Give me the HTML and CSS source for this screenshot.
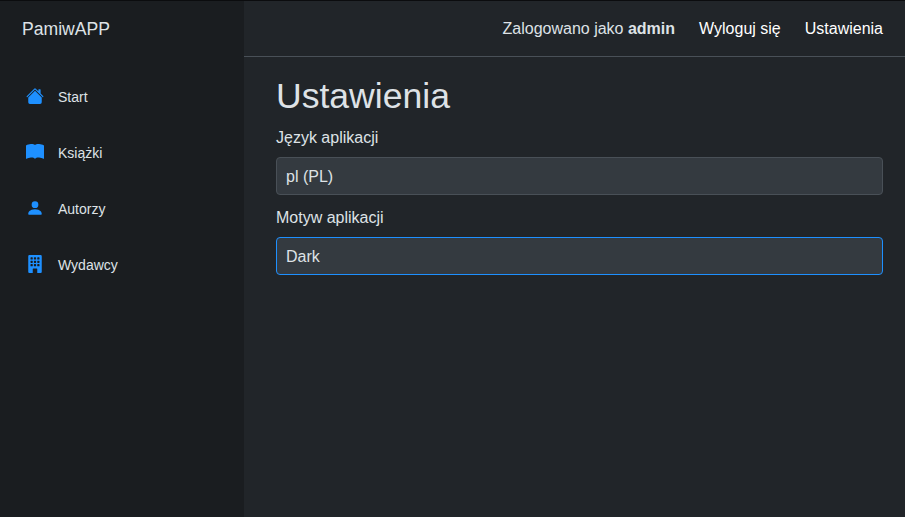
FILE: index.html
```
<!DOCTYPE html>
<html lang="pl">
<head>
<meta charset="utf-8">
<title>Ustawienia</title>
<link rel="stylesheet" href="styles.css">
</head>
<body>
<div class="page">
  <aside class="sidebar">
    <div class="brand">PamiwAPP</div>
    <nav class="menu">
      <a class="menu-item"><svg class="icon" viewBox="0 0 16 16"><path d="M8.707 1.5a1 1 0 0 0-1.414 0L.646 8.146a.5.5 0 0 0 .708.708L8 2.207l6.646 6.647a.5.5 0 0 0 .708-.708L13 5.793V2.5a.5.5 0 0 0-.5-.5h-1a.5.5 0 0 0-.5.5v1.293z"/><path d="m8 3.293 6 6V13.5a1.5 1.5 0 0 1-1.5 1.5h-9A1.5 1.5 0 0 1 2 13.5V9.293z"/></svg><span>Start</span></a>
      <a class="menu-item"><svg class="icon" viewBox="0 0 16 16"><path d="M8 1.783C7.015.936 5.587.81 4.287.94c-1.514.153-3.042.672-3.994 1.105A.5.5 0 0 0 0 2.5v11a.5.5 0 0 0 .707.455c.882-.4 2.303-.881 3.68-1.02 1.409-.142 2.59.087 3.223.877a.5.5 0 0 0 .78 0c.633-.79 1.814-1.019 3.222-.877 1.378.139 2.8.62 3.681 1.02A.5.5 0 0 0 16 13.5v-11a.5.5 0 0 0-.293-.455c-.952-.433-2.48-.952-3.994-1.105C10.413.809 8.985.936 8 1.783"/></svg><span>Książki</span></a>
      <a class="menu-item"><svg class="icon" viewBox="0 0 16 16"><path d="M3 14s-1 0-1-1 1-4 6-4 6 3 6 4-1 1-1 1zm5-6a3 3 0 1 0 0-6 3 3 0 0 0 0 6"/></svg><span>Autorzy</span></a>
      <a class="menu-item"><svg class="icon" viewBox="0 0 16 16"><path fill-rule="evenodd" d="M3 0a1 1 0 0 0-1 1v14a1 1 0 0 0 1 1h3v-3.5a.5.5 0 0 1 .5-.5h3a.5.5 0 0 1 .5.5V16h3a1 1 0 0 0 1-1V1a1 1 0 0 0-1-1zM4.500 2h1a.5.5 0 0 1 .5.5v1a.5.5 0 0 1-.5.5h-1a.5.5 0 0 1-.5-.5v-1a.5.5 0 0 1 .5-.5zM7.500 2h1a.5.5 0 0 1 .5.5v1a.5.5 0 0 1-.5.5h-1a.5.5 0 0 1-.5-.5v-1a.5.5 0 0 1 .5-.5zM10.500 2h1a.5.5 0 0 1 .5.5v1a.5.5 0 0 1-.5.5h-1a.5.5 0 0 1-.5-.5v-1a.5.5 0 0 1 .5-.5zM4.500 5h1a.5.5 0 0 1 .5.5v1a.5.5 0 0 1-.5.5h-1a.5.5 0 0 1-.5-.5v-1a.5.5 0 0 1 .5-.5zM7.500 5h1a.5.5 0 0 1 .5.5v1a.5.5 0 0 1-.5.5h-1a.5.5 0 0 1-.5-.5v-1a.5.5 0 0 1 .5-.5zM10.500 5h1a.5.5 0 0 1 .5.5v1a.5.5 0 0 1-.5.5h-1a.5.5 0 0 1-.5-.5v-1a.5.5 0 0 1 .5-.5zM4.500 8h1a.5.5 0 0 1 .5.5v1a.5.5 0 0 1-.5.5h-1a.5.5 0 0 1-.5-.5v-1a.5.5 0 0 1 .5-.5zM7.500 8h1a.5.5 0 0 1 .5.5v1a.5.5 0 0 1-.5.5h-1a.5.5 0 0 1-.5-.5v-1a.5.5 0 0 1 .5-.5zM10.500 8h1a.5.5 0 0 1 .5.5v1a.5.5 0 0 1-.5.5h-1a.5.5 0 0 1-.5-.5v-1a.5.5 0 0 1 .5-.5z"/></svg><span>Wydawcy</span></a>
    </nav>
  </aside>
  <main class="main">
    <header class="topbar">
      <span>Zalogowano jako <b>admin</b></span>
      <a class="top-link">Wyloguj się</a>
      <a class="top-link">Ustawienia</a>
    </header>
    <section class="content">
      <h1>Ustawienia</h1>
      <div class="field">
        <div class="label">Język aplikacji</div>
        <div class="select">pl (PL)</div>
      </div>
      <div class="field">
        <div class="label">Motyw aplikacji</div>
        <div class="select active">Dark</div>
      </div>
    </section>
  </main>
</div>
</body>
</html>
```
FILE: styles.css
```
* { box-sizing: border-box; }
body {
  margin: 0;
  background: #212529;
  color: #dee2e6;
  font: 16px/24px "Liberation Sans", Arial, sans-serif;
}
.page {
  display: flex;
  height: 517px;
  border-top: 1px solid #0b0c0e;
}
.sidebar {
  width: 244px;
  background: #1a1d20;
}
.brand {
  height: 56px;
  padding-left: 22px;
  font-size: 17.6px;
  line-height: 56px;
}
.menu { padding-top: 12px; }
.menu-item {
  display: flex;
  align-items: center;
  gap: 14px;
  height: 56px;
  padding-left: 26px;
  font-size: 14px;
}
.icon {
  width: 18px;
  height: 18px;
  margin-bottom: 2px;
  fill: #1e90ff;
}
.main { flex: 1; }
.topbar {
  display: flex;
  justify-content: flex-end;
  align-items: center;
  gap: 24px;
  height: 56px;
  padding-right: 22px;
  border-bottom: 1px solid #495057;
}
.top-link { color: #fff; }
.content { padding: 17.6px 22px 0 32px; }
h1 {
  margin: 0 0 9px;
  font-size: 35.575px;
  font-weight: 500;
  line-height: 1.2;
}
.field { margin-bottom: 11px; }
.label { margin-bottom: 7px; }
.select {
  height: 38px;
  padding: 7px 9px 5px;
  border: 1px solid #495057;
  border-radius: 4px;
  background: #343a40;
}
.select.active { border-color: #1e90ff; }
```
